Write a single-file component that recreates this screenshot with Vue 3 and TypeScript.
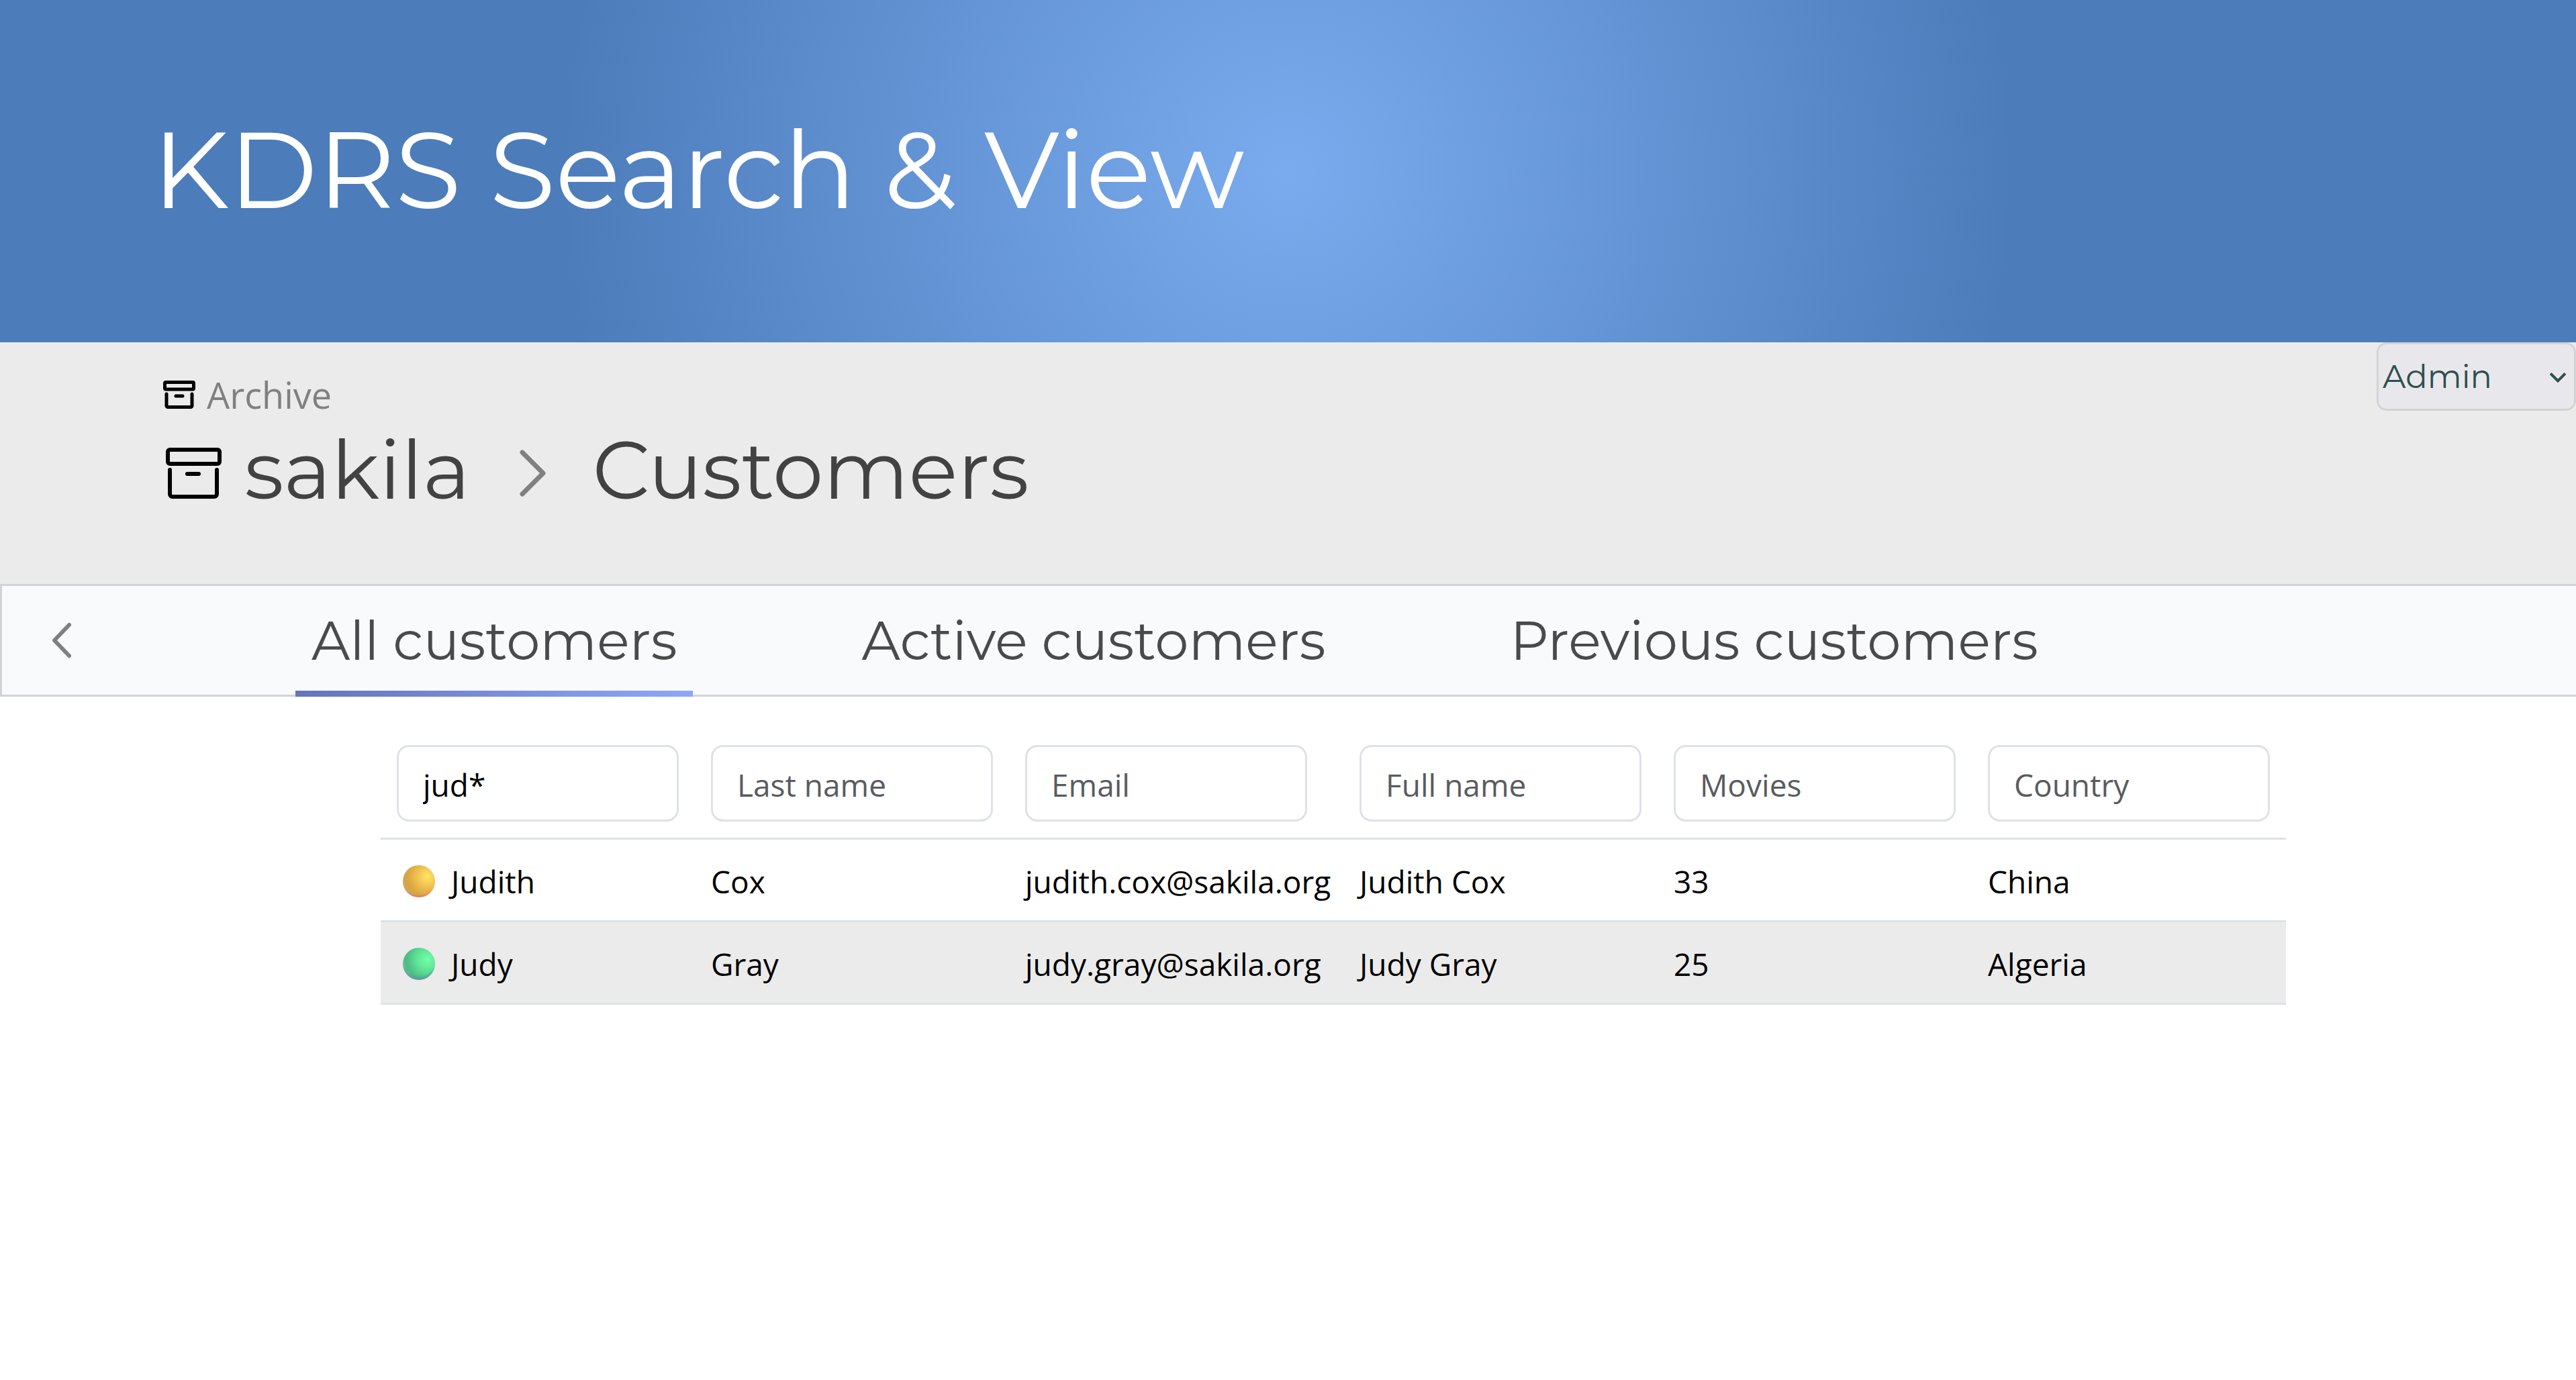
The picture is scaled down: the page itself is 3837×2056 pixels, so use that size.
<script setup lang="ts">
import { reactive, ref } from 'vue'

interface Column {
  key: 'first' | 'last' | 'email' | 'full' | 'movies' | 'country'
  label: string
}

interface Customer {
  first: string
  last: string
  email: string
  full: string
  movies: number
  country: string
  status: 'previous' | 'active'
}

const columns: Column[] = [
  { key: 'first', label: 'First name' },
  { key: 'last', label: 'Last name' },
  { key: 'email', label: 'Email' },
  { key: 'full', label: 'Full name' },
  { key: 'movies', label: 'Movies' },
  { key: 'country', label: 'Country' },
]

const customers: Customer[] = [
  { first: 'Judith', last: 'Cox', email: 'judith.cox@sakila.org', full: 'Judith Cox', movies: 33, country: 'China', status: 'previous' },
  { first: 'Judy', last: 'Gray', email: 'judy.gray@sakila.org', full: 'Judy Gray', movies: 25, country: 'Algeria', status: 'active' },
]

const tabs = ['All customers', 'Active customers', 'Previous customers']
const current = ref(0)
const role = ref('Admin')
const filters = reactive({ first: 'jud*', last: '', email: '', full: '', movies: '', country: '' })
</script>

<template>
  <div class="page">
    <header class="banner">
      <h1>KDRS Search &amp; View</h1>
    </header>

    <section class="heading">
      <nav class="crumbs" aria-label="Breadcrumb">
        <a class="archive" href="#">
          <svg class="icon-small" viewBox="0 0 48 42" fill="none" stroke="#000" stroke-width="5" stroke-linecap="round" stroke-linejoin="round">
            <rect x="2.5" y="2.5" width="43" height="10.5" rx="1.5" />
            <path d="M5 20v17.5a2 2 0 0 0 2 2h34a2 2 0 0 0 2-2V20M19 23h10" />
          </svg>
          Archive
        </a>
        <h2 class="trail">
          <svg class="icon-large" viewBox="0 0 84 76" fill="none" stroke="#000" stroke-width="6" stroke-linecap="round" stroke-linejoin="round">
            <rect x="4" y="3" width="77" height="21" rx="3" />
            <path d="M7 33v36a4 4 0 0 0 4 4h62a4 4 0 0 0 4-4V33M33 39h17" />
          </svg>
          <a href="#">sakila</a>
          <svg class="separator" viewBox="0 0 40 70" fill="none" stroke="#808080" stroke-width="7" stroke-linecap="round" stroke-linejoin="round">
            <path d="M4 4l31 31L4 66" />
          </svg>
          <span>Customers</span>
        </h2>
      </nav>
      <div class="role">
        <select v-model="role" aria-label="Role">
          <option>Admin</option>
          <option>User</option>
        </select>
        <svg class="role-arrow" viewBox="0 0 24 15" fill="none" stroke="#2f4f4f" stroke-width="4">
          <path d="M1 1.500l11 11 11-11" />
        </svg>
      </div>
    </section>

    <nav class="tabbar" aria-label="Customer lists">
      <button class="back" type="button" aria-label="Back">
        <svg viewBox="0 0 30 54" fill="none" stroke="#808080" stroke-width="6" stroke-linecap="round" stroke-linejoin="round">
          <path d="M26 4L4 27l22 23" />
        </svg>
      </button>
      <div class="tabs">
        <button
          v-for="(tab, i) in tabs"
          :key="tab"
          type="button"
          class="tab"
          :class="{ active: i === current }"
          @click="current = i"
        >{{ tab }}</button>
      </div>
    </nav>

    <main class="content">
      <table>
        <thead>
          <tr>
            <th v-for="c in columns" :key="c.key" scope="col" :class="c.key">
              <input v-model="filters[c.key]" type="text" :placeholder="c.label" :aria-label="c.label" />
            </th>
          </tr>
        </thead>
        <tbody>
          <tr v-for="row in customers" :key="row.email">
            <td v-for="c in columns" :key="c.key">
              <span v-if="c.key === 'first'" class="name">
                <i class="ball" :class="row.status"></i>{{ row.first }}
              </span>
              <template v-else>{{ row[c.key] }}</template>
            </td>
          </tr>
        </tbody>
      </table>
    </main>
  </div>
</template>

<style>
body {
  background: #fff;
}
</style>

<style scoped>
.page {
  font-family: "Segoe UI", "Open Sans", "Noto Sans", sans-serif;
  font-size: 46px;
  color: #000;
}

h1,
h2 {
  margin: 0;
  font-weight: 400;
}

a {
  color: inherit;
  text-decoration: none;
}

svg {
  display: block;
  flex: none;
}

button,
input,
select {
  margin: 0;
  font: inherit;
  color: inherit;
}

.banner {
  display: flex;
  align-items: center;
  height: 506px;
  padding: 0 227px 4px;
  background: radial-gradient(circle, #7aabee 0%, #4c7cba 56%);
}

.banner h1 {
  font-family: Montserrat, Inter, sans-serif;
  font-size: 160px;
  line-height: 200px;
  color: #fff;
}

.heading {
  display: flex;
  justify-content: space-between;
  align-items: flex-start;
  height: 360px;
  background: #ebebeb;
}

.crumbs {
  padding: 36px 0 0 243px;
}

.archive {
  display: flex;
  align-items: center;
  gap: 17px;
  font-size: 54px;
  line-height: 84px;
  color: #808080;
}

.icon-small {
  width: 48px;
  height: 42px;
}

.trail {
  display: flex;
  align-items: center;
  font-family: Montserrat, Inter, sans-serif;
  font-size: 120px;
  line-height: 140px;
  color: #424242;
}

.icon-large {
  width: 84px;
  height: 76px;
  margin: 10px 34px 0 3px;
}

.separator {
  width: 40px;
  height: 70px;
  margin: 10px 68px 0 74px;
}

.role {
  position: relative;
  width: 297px;
}

.role select {
  display: block;
  width: 100%;
  height: 102px;
  padding: 0 48px 0 6px;
  border: 3px solid #d3d3d3;
  border-radius: 15px;
  background: #e8e8ec;
  appearance: none;
  font-family: Montserrat, Inter, sans-serif;
  font-size: 48px;
  color: #2f4f4f;
}

.role-arrow {
  position: absolute;
  top: 45px;
  right: 15px;
  width: 24px;
  height: 15px;
  pointer-events: none;
}

.tabbar {
  display: flex;
  height: 168px;
  box-sizing: border-box;
  border: 3px solid #d3d3d3;
  border-right: 0;
  background: #f8fafc;
}

.back {
  display: flex;
  align-items: center;
  width: 437px;
  padding: 0 0 0 74px;
  border: 0;
  background: none;
}

.back svg {
  width: 30px;
  height: 54px;
}

.tabs {
  display: flex;
  gap: 227px;
  margin-bottom: -3px;
}

.tab {
  padding: 0 24px 2px;
  border: 0;
  background: none;
  font-family: Montserrat, Inter, sans-serif;
  font-size: 80px;
  line-height: 100px;
  white-space: nowrap;
  color: #4a4a4a;
}

.tab.active {
  background: linear-gradient(90deg, #6375b8, #8fa6f8) bottom / 100% 9px no-repeat;
}

.content {
  padding: 48px 432px 0 567px;
}

table {
  width: 100%;
  table-layout: fixed;
  border-collapse: separate;
  border-spacing: 0;
}

th,
td {
  padding: 24px;
  border-bottom: 3px solid #dee2e6;
  text-align: left;
}

.email {
  width: 450px;
}

th input {
  display: block;
  width: 420px;
  height: 114px;
  box-sizing: border-box;
  padding: 3px 36px 0;
  border: 3px solid #dee2e6;
  border-radius: 18px;
  background: #fff;
  font-weight: 400;
}

th input::placeholder {
  color: #595c5f;
  opacity: 1;
}

td {
  padding: 26px 24px 22px;
  line-height: 72px;
  white-space: nowrap;
}

tbody tr:nth-child(even) {
  background: #ebebeb;
}

.name {
  display: flex;
  align-items: center;
  gap: 24px;
  padding-left: 9px;
}

.ball {
  width: 48px;
  height: 48px;
  border-radius: 50%;
}

.ball.previous {
  background:
    radial-gradient(circle at 50% 34%, transparent 27px, rgba(222, 105, 125, 0.9) 33px),
    radial-gradient(circle at 76% 35%, #ffe664 0%, #f0c050 16px, #d9a441 30px, #cda66c 42px);
}

.ball.active {
  background:
    radial-gradient(circle at 50% 34%, transparent 25px, rgba(90, 130, 175, 0.9) 34px),
    radial-gradient(circle at 76% 37%, #70ffa8 0%, #5fe396 16px, #4dbb84 31px, #78c492 42px);
}
</style>
